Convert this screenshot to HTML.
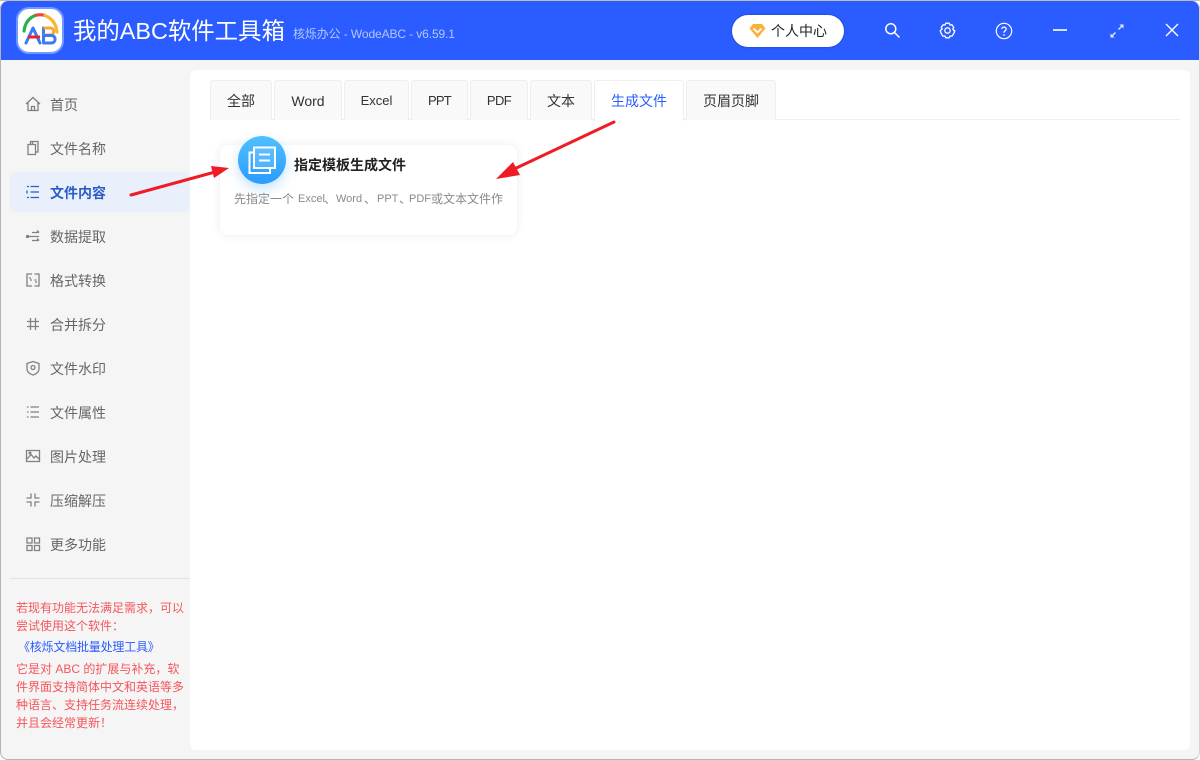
<!DOCTYPE html>
<html lang="zh">
<head>
<meta charset="utf-8">
<title>我的ABC软件工具箱</title>
<style>
*{box-sizing:border-box;margin:0;padding:0}
html,body{width:1200px;height:760px;overflow:hidden;background:#fff;font-family:"Liberation Sans","Noto Sans CJK SC",sans-serif}
.abs{position:absolute}
#win{position:absolute;left:0;top:1px;width:1200px;height:759px;background:#f5f5f5;border-radius:8px;overflow:hidden}
#bg{position:absolute;left:0;top:0;width:1200px;height:760px;background:#fff}
#topline{position:absolute;left:0;top:0;width:1200px;height:1px;background:#bdbdbd}
#edge{position:absolute;left:0;top:1px;width:1200px;height:759px;border:1px solid #b4b4b4;border-right-color:#d4d4d4;border-top:none;border-radius:8px;pointer-events:none}
#head{position:absolute;left:0;top:0;width:1200px;height:59px;background:#2a5cff}
#logo{position:absolute;left:16px;top:6px;width:48px;height:47px;border-radius:13px;background:#fff;border:2px solid #6f9bff}
#title{position:absolute;left:73px;top:13px;font-size:23.4px;line-height:34px;color:#fff;white-space:nowrap}
#sub{position:absolute;left:293px;top:24px;font-size:12px;line-height:18px;color:#b5c7ff;white-space:nowrap;letter-spacing:-.11px}
#user{position:absolute;left:732px;top:14px;width:112px;height:32px;border-radius:16px;background:#fff;font-size:14px;color:#222;line-height:32px;padding-left:39px;box-shadow:0 0 2px rgba(0,0,0,.3)}
.nav{position:absolute;left:0;width:190px;height:40px;font-size:14px;line-height:44px;color:#666;padding-left:50px;white-space:nowrap}
.nav.on{left:10px;width:180px;padding-left:40px;background:#e9effb;color:#2a5cc8;font-weight:bold;border-radius:6px;line-height:42px}
.nav svg{position:absolute;left:25px;top:13px;width:16px;height:16px;fill:none;stroke:#808080;stroke-width:1.3}
.nav.on svg{left:15px;top:12px;stroke:#2a5cc8}
#hr{position:absolute;left:10px;top:577px;width:180px;height:1px;background:#e2e2e2}
.note{position:absolute;left:16px;font-size:12px;line-height:18px;color:#f5565c;white-space:nowrap}
#panel{position:absolute;left:190px;top:69px;width:1000px;height:680px;background:#fff;border-radius:6px}
#tabline{position:absolute;left:210px;top:118px;width:970px;height:1px;background:#eee}
.tab{position:absolute;top:79px;height:40px;background:#f9f9f9;border:1px solid #eee;border-bottom:none;border-radius:3px 3px 0 0;font-size:14px;line-height:40px;text-align:center;color:#333;white-space:nowrap}
.tab.on{background:#fff;color:#2a5cff;height:41px}
#card{position:absolute;left:220px;top:144px;width:297px;height:90px;background:#fff;border-radius:8px;box-shadow:0 0 10px rgba(0,0,0,.08)}
#circle{position:absolute;left:238px;top:135px;width:48px;height:48px;border-radius:50%;background:linear-gradient(180deg,#4fc0ff,#2b9bff);box-shadow:0 5px 12px rgba(60,160,255,.3)}
#ct{position:absolute;left:294px;top:155px;font-size:14px;line-height:19px;font-weight:bold;color:#222;white-space:nowrap}
#cd{position:absolute;left:234px;top:189px;width:270px;height:20px;overflow:hidden;font-size:12px;line-height:18px;color:#8a8a8a;white-space:nowrap}
#cd span{position:absolute;top:0}
#cd .l{font-size:11px}
#arrows{position:absolute;left:0;top:0;width:1200px;height:760px;pointer-events:none}
</style>
</head>
<body>
<div id="bg"></div>
<div id="win">
  <div id="head">
    <div id="logo">
      <svg width="44" height="43" viewBox="0 0 44 43" fill="none">
        <path d="M6 22C7 14 11 9 17 6.500" stroke="#2eae4f" stroke-width="3.200" stroke-linecap="round"/>
        <path d="M17 6.500C20 5.500 24 5.500 27 6.500" stroke="#e8453c" stroke-width="3.200"/>
        <path d="M27 6.500C33 9 38 14 39 23" stroke="#f7b733" stroke-width="3.200" stroke-linecap="round"/>
        <path d="M8 34L15 19L22 34" stroke="#3a7bf5" stroke-width="3" stroke-linecap="round" stroke-linejoin="round"/>
        <path d="M10 28H22" stroke="#e8232c" stroke-width="3"/>
        <path d="M25.500 19V34" stroke="#3a7bf5" stroke-width="3" stroke-linecap="round"/>
        <path d="M25.500 19H32C37 19 37 26 32 26H25.500" stroke="#f7a833" stroke-width="3"/>
        <path d="M25.500 26.500H33C38.500 26.500 38.500 34 33 34H25.500" stroke="#3a7bf5" stroke-width="3"/>
      </svg>
    </div>
    <div id="title">我的ABC软件工具箱</div>
    <div id="sub">核烁办公 - WodeABC - v6.59.1</div>
    <div id="user">
      <svg class="abs" style="left:17px;top:8px" width="17" height="16" viewBox="0 0 17 16"><path d="M4 1H13L16.500 5.500L8.500 15L.5 5.500Z" fill="#fbb03b"/><path d="M4.500 5.500L8.500 9.500L12.500 5.500" fill="none" stroke="#fff" stroke-width="1.800"/></svg>
      个人中心
    </div>
    <svg class="abs" style="left:884px;top:21px" width="17" height="17" viewBox="0 0 17 17" fill="none" stroke="#fff" stroke-width="1.500"><circle cx="6.800" cy="6.800" r="5"/><path d="M10.500 10.500L15.500 15.500"/></svg>
    <svg class="abs" style="left:939px;top:21px" width="17" height="17" viewBox="0 0 17 17" fill="none" stroke="#fff" stroke-width="1.300"><path d="M6.800 1.200L10.200 1.200L11 3L13 2.800L14.800 5.500L13.700 7L14.800 8.500L15.800 8.500L14.800 11.500L13 14.200L11 14L10.200 15.800L6.800 15.800L6 14L4 14.200L2.200 11.500L1.200 8.500L3.300 7L2.200 5.500L4 2.800L6 3Z" stroke-linejoin="round"/><circle cx="8.500" cy="8.500" r="2.700"/></svg>
    <svg class="abs" style="left:995px;top:21px" width="18" height="18" viewBox="0 0 18 18" fill="none" stroke="#fff" stroke-width="1.200"><circle cx="9" cy="9" r="7.700"/><path d="M6.800 7C6.800 4.500 11.200 4.500 11.200 7C11.200 8.800 9 8.800 9 10.800" stroke-width="1.300"/><path d="M9 12.300V13.800" stroke-width="1.400"/></svg>
    <div class="abs" style="left:1053px;top:28px;width:14px;height:2px;background:#d6e0ff"></div>
    <svg class="abs" style="left:1109px;top:22px" width="16" height="16" viewBox="0 0 16 16" fill="none" stroke="#e6ecff" stroke-width="1.300"><path d="M9.500 6.500L13.500 2.500"/><path d="M10.500 1.500H14.500V5.500L10.500 1.500Z" fill="#e6ecff" stroke="none"/><path d="M6.500 9.500L2.500 13.500"/><path d="M1.500 10.500V14.500H5.500L1.500 10.500Z" fill="#e6ecff" stroke="none"/></svg>
    <svg class="abs" style="left:1165px;top:22px" width="14" height="14" viewBox="0 0 14 14" fill="none" stroke="#fff" stroke-width="1.400"><path d="M1 1L13 13M13 1L1 13"/></svg>
  </div>

  <div class="nav" style="top:82px"><svg viewBox="0 0 16 16"><path d="M1 8L8 1.500L15 8M3 6.500V14.500H13V6.500M6.500 14.500V10.500H9.500V14.500"/></svg>首页</div>
  <div class="nav" style="top:126px"><svg viewBox="0 0 16 16"><path d="M3 4.500H10.500V14.500H3ZM5.500 4.500V1.500H13V12H10.500M7.500 1.500V4.500"/></svg>文件名称</div>
  <div class="nav on" style="top:171px"><svg viewBox="0 0 16 16"><path d="M5.500 2.500H14M5.500 8H14M5.500 13.500H14M2 2.500H4M2 13.500H4M2 6.500V9.500"/></svg>文件内容</div>
  <div class="nav" style="top:214px"><svg viewBox="0 0 16 16"><path d="M7 4.500H14M3.500 8.500H14M7 12.500H14M12 2.500L14 4.500M12 10.500L14 12.500"/><circle cx="2.500" cy="8.500" r="1" fill="#777"/></svg>数据提取</div>
  <div class="nav" style="top:258px"><svg viewBox="0 0 16 16"><path d="M7 2H2V14H7M9.500 2H14V14H9.500M5 8H7M9.500 8H11.500M5 5V7M11 9V11"/></svg>格式转换</div>
  <div class="nav" style="top:302px"><svg viewBox="0 0 16 16"><path d="M5.500 2V14M10.500 2V14M2 5.500H14M2 10.500H14"/></svg>合并拆分</div>
  <div class="nav" style="top:346px"><svg viewBox="0 0 16 16"><path d="M8 1.500L14 3.500V9C14 12 11 14 8 15C5 14 2 12 2 9V3.500Z"/><circle cx="8" cy="7.500" r="2"/></svg>文件水印</div>
  <div class="nav" style="top:390px"><svg viewBox="0 0 16 16"><path d="M5.500 3H14M5.500 8H14M5.500 13H14M2 3H3.500M2 8H3.500M2 13H3.500"/></svg>文件属性</div>
  <div class="nav" style="top:434px"><svg viewBox="0 0 16 16"><path d="M1.500 2.500H14.500V13.500H1.500Z"/><path d="M2 11L6 6.500L9 10L11 8L14 11"/><circle cx="5" cy="5" r=".8"/></svg>图片处理</div>
  <div class="nav" style="top:478px"><svg viewBox="0 0 16 16"><path d="M6 1.500V6H1.500M10 1.500V6H14.500M6 14.500V10H1.500M10 14.500V10H14.500"/></svg>压缩解压</div>
  <div class="nav" style="top:522px"><svg viewBox="0 0 16 16"><path d="M2 2H7V7H2ZM9.500 2H14.500V7H9.500ZM2 9.500H7V14.500H2ZM9.500 9.500H14.500V14.500H9.500Z"/></svg>更多功能</div>

  <div id="hr"></div>
  <div class="note" style="top:598px">若现有功能无法满足需求，可以</div>
  <div class="note" style="top:616px">尝试使用这个软件：</div>
  <div class="note" style="top:637px;left:18px;color:#2a5cff;letter-spacing:-.2px">《核烁文档批量处理工具》</div>
  <div class="note" style="top:659px">它是对 ABC 的扩展与补充，软</div>
  <div class="note" style="top:677px">件界面支持简体中文和英语等多</div>
  <div class="note" style="top:695px">种语言、支持任务流连续处理，</div>
  <div class="note" style="top:713px">并且会经常更新！</div>

  <div id="panel"></div>
  <div id="tabline"></div>
  <div class="tab" style="left:210px;width:62px">全部</div>
  <div class="tab" style="left:274px;width:68px">Word</div>
  <div class="tab" style="left:344px;width:65px;font-size:13px">Excel</div>
  <div class="tab" style="left:411px;width:57px;font-size:13px;letter-spacing:-.8px">PPT</div>
  <div class="tab" style="left:470px;width:58px;font-size:13px;letter-spacing:-.6px">PDF</div>
  <div class="tab" style="left:530px;width:62px">文本</div>
  <div class="tab on" style="left:594px;width:90px">生成文件</div>
  <div class="tab" style="left:686px;width:90px">页眉页脚</div>

  <div id="card"></div>
  <div id="circle">
    <svg class="abs" style="left:10px;top:10px" width="28" height="28" viewBox="0 0 28 28" fill="none" stroke="#fff" stroke-width="2"><path d="M6 1.500H27V22H6Z" fill="rgba(255,255,255,.12)"/><path d="M6 6.500H1.500V27H22V22"/><path d="M11 8.500H22M11 14.500H22"/></svg>
  </div>
  <div id="ct">指定模板生成文件</div>
  <div id="cd"><span style="left:0">先指定一个</span><span class="l" style="left:64px">Excel</span><span style="left:90px">、</span><span class="l" style="left:102px">Word</span><span style="left:130px">、</span><span class="l" style="left:143px">PPT</span><span style="left:165px">、</span><span class="l" style="left:175px">PDF</span><span style="left:197px">或文本文件作为模板</span></div>
</div>
<div id="topline"></div>
<div id="edge"></div>
<svg id="arrows" viewBox="0 0 1200 760">
  <path d="M131 195L215 172" stroke="#ee1c25" stroke-width="3" stroke-linecap="round"/>
  <path d="M229 168L214 178L211 166Z" fill="#ee1c25"/>
  <path d="M614 122L510 171" stroke="#ee1c25" stroke-width="3" stroke-linecap="round"/>
  <path d="M496 179L513 162L520 175Z" fill="#ee1c25"/>
</svg>
</body>
</html>
